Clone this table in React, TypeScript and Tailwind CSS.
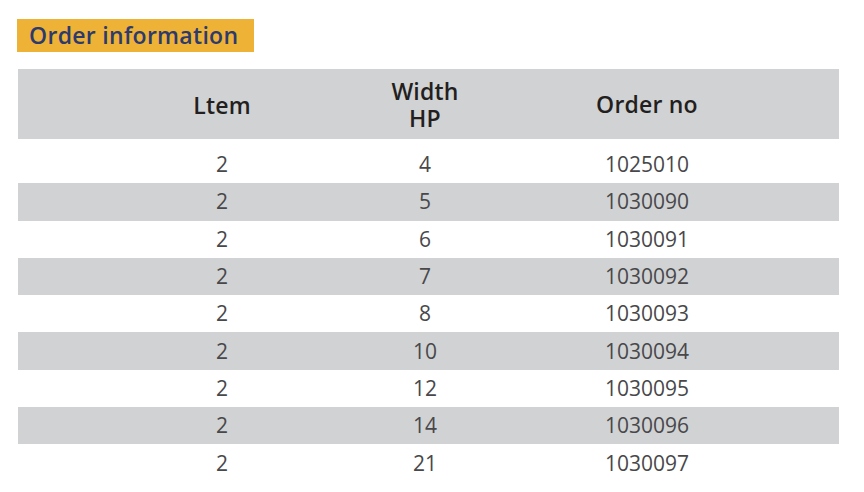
const rows = [
  { item: "2", width: "4", order: "1025010" },
  { item: "2", width: "5", order: "1030090" },
  { item: "2", width: "6", order: "1030091" },
  { item: "2", width: "7", order: "1030092" },
  { item: "2", width: "8", order: "1030093" },
  { item: "2", width: "10", order: "1030094" },
  { item: "2", width: "12", order: "1030095" },
  { item: "2", width: "14", order: "1030096" },
  { item: "2", width: "21", order: "1030097" },
];

const cols = "grid grid-cols-[102px_204px_202px_242px_1fr] items-center";

export default function App() {
  return (
    <div className="w-[864px] h-[492px] bg-white font-['Open_Sans',sans-serif] overflow-hidden">
      <div className="pt-[19px] pl-[17px]">
        <div className="w-[237px] h-[33px] bg-[#eeb236] flex items-center pl-[12px]">
          <span className="text-[23px] font-semibold text-[#2c3a6e] leading-none tracking-[0.3px]">Order information</span>
        </div>
      </div>

      <div className="mt-[17px] ml-[18px] w-[821px]">
        <div className={`${cols} h-[70px] bg-[#d1d2d4] text-[#231f20] text-[23px] font-semibold leading-[26px] tracking-[0.2px]`}>
          <div />
          <div className="text-center pt-[2px]">Ltem</div>
          <div className="flex flex-col items-center gap-[1px]">
            <span className="leading-[26px]">Width</span>
            <span className="leading-[26px]">HP</span>
          </div>
          <div className="text-center">Order no</div>
          <div />
        </div>

        <div className="mt-[7px]">
          {rows.map((r, i) => (
            <div
              key={r.order}
              className={`${cols} h-[37.3px] text-[21px] text-[#48484a] leading-none ${i % 2 === 1 ? "bg-[#d1d2d4]" : "bg-white"}`}
            >
              <div />
              <div className="text-center">{r.item}</div>
              <div className="text-center">{r.width}</div>
              <div className="text-center">{r.order}</div>
              <div />
            </div>
          ))}
        </div>
      </div>
    </div>
  );
}
